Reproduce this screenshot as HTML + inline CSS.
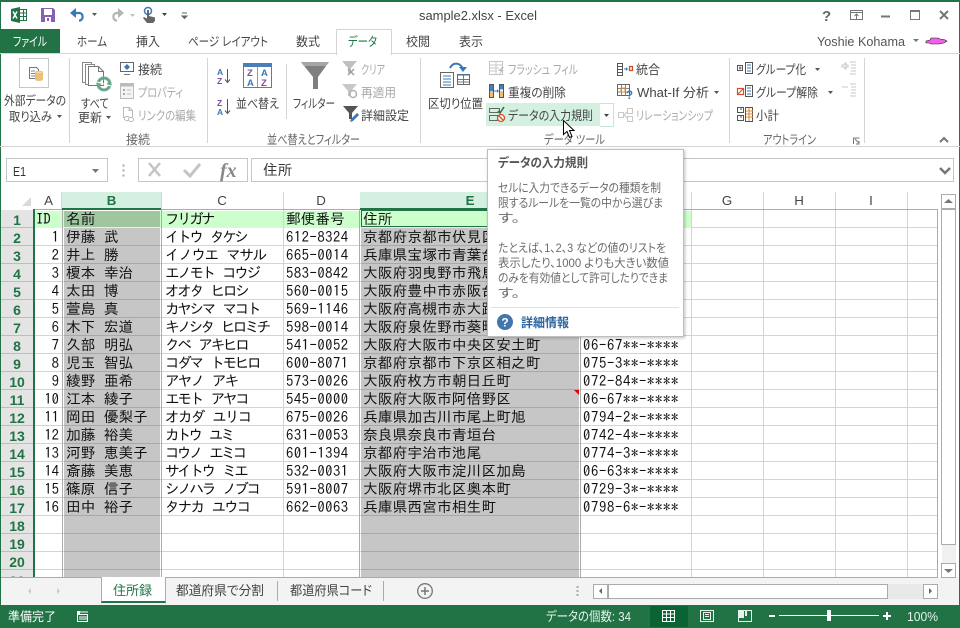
<!DOCTYPE html>
<html lang="ja"><head><meta charset="utf-8"><title>sample2.xlsx - Excel</title>
<style>
html,body{margin:0;padding:0;background:#fff}
#w{position:relative;width:960px;height:628px;overflow:hidden;background:#fff;font-family:"Liberation Sans","Noto Sans CJK JP",sans-serif;font-size:12px;color:#444}
.b{position:absolute}
svg text{font-family:"Liberation Sans","Noto Sans CJK JP",sans-serif;font-size:12.5px;fill:#444;font-feature-settings:"palt";white-space:pre}
svg .g{fill:#a9a9a9}svg .l{fill:#666}svg .w{fill:#fff}svg .s{fill:#e8f2ec}
svg .tp{fill:#6d6d6d;font-size:12px}
.r{position:absolute;left:0;width:960px;height:18px;line-height:18px;font-family:"IPAGothic","Liberation Sans",sans-serif;font-size:14.67px;color:#111;white-space:nowrap}
.r span{position:absolute;top:0}
.r i{display:inline-block;width:8.5px}
.r .n{left:1px;top:1px;width:32px;text-align:center;color:#217346;font:bold 14px/18px "Liberation Sans",sans-serif}
.r .a{left:36px;width:23px;text-align:right}
.r .b1{left:66px}.r .c1{left:165px}.r .d1{left:286px;letter-spacing:.5px}.r .e1{left:363px;letter-spacing:.15px}.r .f1{left:583px;letter-spacing:.67px}
.ch{position:absolute;top:192px;height:17px;line-height:17px;text-align:center;font-size:13.3px;color:#444}
</style></head><body><div id="w">

<!-- window frame -->
<div class="b" style="left:0;top:0;width:960px;height:2px;background:#217346"></div>
<div class="b" style="left:0;top:0;width:1px;height:628px;background:#217346"></div>
<div class="b" style="left:959px;top:0;width:1px;height:628px;background:#217346"></div>

<!-- tab strip -->
<div class="b" style="left:0;top:29px;width:60px;height:25px;background:#217346"></div>
<div class="b" style="left:0;top:53px;width:960px;height:1px;background:#d4d4d4"></div>
<div class="b" style="left:336px;top:29px;width:54px;height:25px;background:#fff;border:1px solid #d4d4d4;border-bottom:0"></div>

<!-- ribbon bottom & highlight -->
<div class="b" style="left:0;top:146px;width:960px;height:1px;background:#d4d4d4"></div>
<div class="b" style="left:486px;top:103px;width:114px;height:23px;background:#d3f0e0"></div>
<div class="b" style="left:600px;top:103px;width:13px;height:22px;border:1px solid #c4e6d2;border-left:0"></div>
<div class="b" style="left:19px;top:58px;width:28px;height:28px;border:1px solid #c6c6c6"></div>

<!-- separators -->
<div class="b" style="left:69px;top:58px;width:1px;height:85px;background:#d4d4d4"></div>
<div class="b" style="left:207px;top:58px;width:1px;height:85px;background:#d4d4d4"></div>
<div class="b" style="left:286px;top:64px;width:1px;height:55px;background:#d4d4d4"></div>
<div class="b" style="left:420px;top:58px;width:1px;height:85px;background:#d4d4d4"></div>
<div class="b" style="left:729px;top:58px;width:1px;height:85px;background:#d4d4d4"></div>
<div class="b" style="left:864px;top:58px;width:1px;height:85px;background:#d4d4d4"></div>

<!-- formula bar -->
<div class="b" style="left:6px;top:158px;width:100px;height:22px;border:1px solid #c6c6c6"></div>
<div class="b" style="left:138px;top:158px;width:108px;height:22px;border:1px solid #c6c6c6"></div>
<div class="b" style="left:251px;top:158px;width:701px;height:22px;border:1px solid #c6c6c6"></div>
<div class="b" style="left:263px;top:161px;font:14.67px/18px 'IPAGothic',sans-serif;color:#333">住所</div>

<!-- column header -->
<div class="b" style="left:62px;top:192px;width:99px;height:17px;background:#d3f0e0"></div>
<div class="b" style="left:360px;top:192px;width:220px;height:17px;background:#d3f0e0"></div>
<div class="ch" style="left:35px;width:27px">A</div>
<div class="ch" style="left:62px;width:99px;color:#217346;font-weight:bold">B</div>
<div class="ch" style="left:161px;width:122px">C</div>
<div class="ch" style="left:283px;width:76px">D</div>
<div class="ch" style="left:360px;width:220px;color:#217346;font-weight:bold">E</div>
<div class="ch" style="left:691px;width:72px">G</div>
<div class="ch" style="left:763px;width:72px">H</div>
<div class="ch" style="left:835px;width:72px">I</div>
<div class="b" style="left:61px;top:192px;width:1px;height:17px;background:#d4d4d4"></div>
<div class="b" style="left:161px;top:192px;width:1px;height:17px;background:#d4d4d4"></div>
<div class="b" style="left:283px;top:192px;width:1px;height:17px;background:#d4d4d4"></div>
<div class="b" style="left:691px;top:192px;width:1px;height:17px;background:#d4d4d4"></div>
<div class="b" style="left:763px;top:192px;width:1px;height:17px;background:#d4d4d4"></div>
<div class="b" style="left:835px;top:192px;width:1px;height:17px;background:#d4d4d4"></div>
<div class="b" style="left:907px;top:192px;width:1px;height:17px;background:#d4d4d4"></div>
<div class="b" style="left:35px;top:209px;width:903px;height:1px;background:#ababab"></div>
<div class="b" style="left:62px;top:208px;width:99px;height:2px;background:#217346"></div>
<div class="b" style="left:360px;top:208px;width:220px;height:2px;background:#217346"></div>

<!-- grid -->
<div class="b" style="left:1px;top:210px;width:32px;height:367px;background:repeating-linear-gradient(to bottom,#e4e4e4 0 17px,#bdbdbd 17px 18px)"></div>
<div class="b" style="left:33px;top:209px;width:2px;height:368px;background:#217346"></div>
<div class="b" style="left:35px;top:210px;width:902px;height:367px;background:repeating-linear-gradient(to bottom,#fff 0 17px,#d4d4d4 17px 18px)"></div>
<div class="b" style="left:35px;top:211px;width:656px;height:17px;background:#ccffcc"></div>
<div class="b" style="left:283px;top:210px;width:1px;height:367px;background:#d4d4d4"></div>
<div class="b" style="left:691px;top:210px;width:1px;height:367px;background:#d4d4d4"></div>
<div class="b" style="left:763px;top:210px;width:1px;height:367px;background:#d4d4d4"></div>
<div class="b" style="left:835px;top:210px;width:1px;height:367px;background:#d4d4d4"></div>
<div class="b" style="left:907px;top:210px;width:1px;height:367px;background:#d4d4d4"></div>
<div class="b" style="left:937px;top:209px;width:1px;height:369px;background:#ababab"></div>
<div class="b" style="left:62px;top:210px;width:1px;height:367px;background:#ababab"></div>
<div class="b" style="left:161px;top:210px;width:1px;height:367px;background:#ababab"></div>
<div class="b" style="left:359px;top:210px;width:1px;height:367px;background:#ababab"></div>
<div class="b" style="left:580px;top:210px;width:1px;height:367px;background:#ababab"></div>
<div class="b" style="left:64px;top:228px;width:96px;height:349px;background:repeating-linear-gradient(to bottom,#c6c6c6 0 17px,#a8a8a8 17px 18px)"></div>
<div class="b" style="left:361px;top:228px;width:218px;height:349px;background:repeating-linear-gradient(to bottom,#c6c6c6 0 17px,#a8a8a8 17px 18px)"></div>
<div class="b" style="left:64px;top:211px;width:96px;height:16px;background:#9fc69f"></div>
<div class="b" style="left:361px;top:210px;width:218px;height:17px;border:1px solid #217346;box-sizing:border-box;background:#ccffcc"></div>
<div class="b" style="left:574px;top:390px;width:0;height:0;border-top:5px solid #e00000;border-left:5px solid transparent"></div>

<!-- cell rows -->
<div class="r" style="top:210px"><span class="n">1</span><span style="left:36px">ID</span><span class="b1">名前</span><span class="c1" style="letter-spacing:-2.67px">フリガナ</span><span class="d1" style="letter-spacing:0">郵便番号</span><span class="e1">住所</span></div>
<div class="r" style="top:228px"><span class="n">2</span><span class="a">1</span><span class="b1">伊藤<i></i>武</span><span class="c1" style="letter-spacing:-2.5px">イトウ<i></i>タケシ</span><span class="d1">612-8324</span><span class="e1">京都府京都市伏見区</span></div>
<div class="r" style="top:246px"><span class="n">3</span><span class="a">2</span><span class="b1">井上<i></i>勝</span><span class="c1" style="letter-spacing:-1.5px">イノウエ<i></i>マサル</span><span class="d1">665-0014</span><span class="e1">兵庫県宝塚市青葉台</span></div>
<div class="r" style="top:264px"><span class="n">4</span><span class="a">3</span><span class="b1">榎本<i></i>幸治</span><span class="c1" style="letter-spacing:-2.5px">エノモト<i></i>コウジ</span><span class="d1">583-0842</span><span class="e1">大阪府羽曳野市飛鳥</span></div>
<div class="r" style="top:282px"><span class="n">5</span><span class="a">4</span><span class="b1">太田<i></i>博</span><span class="c1" style="letter-spacing:-2.3px">オオタ<i></i>ヒロシ</span><span class="d1">560-0015</span><span class="e1">大阪府豊中市赤阪台</span></div>
<div class="r" style="top:300px"><span class="n">6</span><span class="a">5</span><span class="b1">萱島<i></i>真</span><span class="c1" style="letter-spacing:-2.4px">カヤシマ<i></i>マコト</span><span class="d1">569-1146</span><span class="e1">大阪府高槻市赤大路</span></div>
<div class="r" style="top:318px"><span class="n">7</span><span class="a">6</span><span class="b1">木下<i></i>宏道</span><span class="c1" style="letter-spacing:-2.8px">キノシタ<i></i>ヒロミチ</span><span class="d1">598-0014</span><span class="e1">大阪府泉佐野市葵町</span></div>
<div class="r" style="top:336px"><span class="n">8</span><span class="a">7</span><span class="b1">久部<i></i>明弘</span><span class="c1" style="letter-spacing:-2.3px">クベ<i></i>アキヒロ</span><span class="d1">541-0052</span><span class="e1">大阪府大阪市中央区安土町</span><span class="f1">06-67**-****</span></div>
<div class="r" style="top:354px"><span class="n">9</span><span class="a">8</span><span class="b1">児玉<i></i>智弘</span><span class="c1" style="letter-spacing:-2.4px">コダマ<i></i>トモヒロ</span><span class="d1">600-8071</span><span class="e1">京都府京都市下京区相之町</span><span class="f1">075-3**-****</span></div>
<div class="r" style="top:372px"><span class="n">10</span><span class="a">9</span><span class="b1">綾野<i></i>亜希</span><span class="c1" style="letter-spacing:-1.9px">アヤノ<i></i>アキ</span><span class="d1">573-0026</span><span class="e1">大阪府枚方市朝日丘町</span><span class="f1">072-84*-****</span></div>
<div class="r" style="top:390px"><span class="n">11</span><span class="a">10</span><span class="b1">江本<i></i>綾子</span><span class="c1" style="letter-spacing:-2.3px">エモト<i></i>アヤコ</span><span class="d1">545-0000</span><span class="e1">大阪府大阪市阿倍野区</span><span class="f1">06-67**-****</span></div>
<div class="r" style="top:408px"><span class="n">12</span><span class="a">11</span><span class="b1">岡田<i></i>優梨子</span><span class="c1" style="letter-spacing:-1.8px">オカダ<i></i>ユリコ</span><span class="d1">675-0026</span><span class="e1">兵庫県加古川市尾上町旭</span><span class="f1">0794-2*-****</span></div>
<div class="r" style="top:426px"><span class="n">13</span><span class="a">12</span><span class="b1">加藤<i></i>裕美</span><span class="c1" style="letter-spacing:-2.9px">カトウ<i></i>ユミ</span><span class="d1">631-0053</span><span class="e1">奈良県奈良市青垣台</span><span class="f1">0742-4*-****</span></div>
<div class="r" style="top:444px"><span class="n">14</span><span class="a">13</span><span class="b1">河野<i></i>恵美子</span><span class="c1" style="letter-spacing:-2.8px">コウノ<i></i>エミコ</span><span class="d1">601-1394</span><span class="e1">京都府宇治市池尾</span><span class="f1">0774-3*-****</span></div>
<div class="r" style="top:462px"><span class="n">15</span><span class="a">14</span><span class="b1">斎藤<i></i>美恵</span><span class="c1" style="letter-spacing:-2.5px">サイトウ<i></i>ミエ</span><span class="d1">532-0031</span><span class="e1">大阪府大阪市淀川区加島</span><span class="f1">06-63**-****</span></div>
<div class="r" style="top:480px"><span class="n">16</span><span class="a">15</span><span class="b1">篠原<i></i>信子</span><span class="c1" style="letter-spacing:-2.5px">シノハラ<i></i>ノブコ</span><span class="d1">591-8007</span><span class="e1">大阪府堺市北区奥本町</span><span class="f1">0729-3*-****</span></div>
<div class="r" style="top:498px"><span class="n">17</span><span class="a">16</span><span class="b1">田中<i></i>裕子</span><span class="c1" style="letter-spacing:-2px">タナカ<i></i>ユウコ</span><span class="d1">662-0063</span><span class="e1">兵庫県西宮市相生町</span><span class="f1">0798-6*-****</span></div>
<div class="r" style="top:516px"><span class="n">18</span></div>
<div class="r" style="top:534px"><span class="n">19</span></div>
<div class="r" style="top:552px"><span class="n">20</span></div>
<div class="r" style="top:571px"><span class="n">21</span></div>

<!-- sheet tab area -->
<div class="b" style="left:1px;top:577px;width:958px;height:28px;background:#f3f3f3"></div>
<div class="b" style="left:938px;top:194px;width:21px;height:383px;background:#fff"></div>
<div class="b" style="left:1px;top:577px;width:937px;height:1px;background:#ababab"></div>
<div class="b" style="left:101px;top:577px;width:63px;height:24px;background:#fff;border-left:1px solid #ababab;border-right:1px solid #ababab;border-bottom:2px solid #217346"></div>
<div class="b" style="left:277px;top:581px;width:1px;height:20px;background:#ababab"></div>
<div class="b" style="left:383px;top:581px;width:1px;height:20px;background:#ababab"></div>

<!-- scrollbars -->
<div class="b" style="left:941px;top:194px;width:13px;height:13px;border:1px solid #ababab;background:#fff"></div>
<div class="b" style="left:941px;top:209px;width:13px;height:334px;border:1px solid #ababab;background:#fff"></div>
<div class="b" style="left:942px;top:545px;width:14px;height:18px;background:#f0f0f0"></div>
<div class="b" style="left:941px;top:563px;width:13px;height:13px;border:1px solid #ababab;background:#fff"></div>
<div class="b" style="left:608px;top:584px;width:315px;height:15px;background:#e9e9e9"></div>
<div class="b" style="left:593px;top:584px;width:13px;height:13px;border:1px solid #ababab;background:#fff"></div>
<div class="b" style="left:608px;top:584px;width:278px;height:13px;border:1px solid #ababab;background:#fff"></div>
<div class="b" style="left:923px;top:584px;width:13px;height:13px;border:1px solid #ababab;background:#fff"></div>

<!-- status bar -->
<div class="b" style="left:0;top:605px;width:960px;height:23px;background:#217346"></div>
<div class="b" style="left:650px;top:606px;width:38px;height:21px;background:#0a6332"></div>

<!-- icons -->
<svg class="b" style="left:0;top:0" width="960" height="628" viewBox="0 0 960 628" fill="none">
<!-- excel -->
<rect x="19.5" y="9.5" width="7" height="11" fill="#fff" stroke="#217346"/><path d="M20 13h7M20 16.500h7M23.500 10v10" stroke="#217346"/>
<path d="M11 9l9-2v16l-9-2z" fill="#217346"/><path d="M13 11.500l4 7M17 11.500l-4 7" stroke="#fff" stroke-width="1.500"/>
<!-- save -->
<path d="M41 8h12l2 2v12H41z" fill="#8561b5"/><rect x="44" y="9" width="8" height="6" fill="#fff"/><rect x="45" y="17" width="6" height="5" fill="#fff"/><rect x="47" y="18" width="2" height="3" fill="#8561b5"/>
<!-- undo -->
<path d="M72 13h8a4 4 0 0 1 0 7.500h-1" stroke="#3a78b5" stroke-width="2.200"/><path d="M76 8v10l-6-5z" fill="#3a78b5"/>
<path d="M92 13h5l-2.500 3z" fill="#555"/>
<!-- redo -->
<path d="M122 13h-6a4 4 0 0 0 0 7.500h1" stroke="#b5b5b5" stroke-width="2.200"/><path d="M118 8v10l6-5z" fill="#b5b5b5"/>
<path d="M130 14h5l-2.500 3z" fill="#c0c0c0"/>
<!-- touch -->
<circle cx="148" cy="11" r="3.500" stroke="#3a78b5" stroke-width="1.500"/><path d="M147 10h2v6l6 1.500v3.500l-2 2h-6l-4-5 1-1 3 1.500z" fill="#666"/>
<path d="M162 13h5l-2.500 3z" fill="#444"/>
<path d="M182 13h5M182 16h5l-2.500 2.500z" stroke="#666" fill="#666" stroke-width="1"/>
<!-- window controls -->
<text x="822" y="21" style="font-weight:bold;font-size:15px;fill:#666">?</text>
<rect x="850.500" y="10.500" width="12" height="9" stroke="#777"/><path d="M851 12.500h11" stroke="#777"/><path d="M856.500 19v-5M854.500 16l2-2 2 2" stroke="#777"/>
<path d="M881 16.500h9" stroke="#777" stroke-width="2"/>
<rect x="910.500" y="10.500" width="9" height="9" stroke="#777"/><path d="M910 11h10" stroke="#777" stroke-width="2"/>
<path d="M940 11l8 8M948 11l-8 8" stroke="#777" stroke-width="2"/>
<path d="M913 39h6l-3 3z" fill="#777"/>
<path d="M926 41l4-1 1-2h7l2 1 4 0.500 3 1.500-3 2-5 1h-8l-2-1h-3z" fill="#f060e8" stroke="#222" stroke-width=".6"/>
<!-- external data -->
<path d="M29.500 67.500h7l2 2v9h-9z" fill="#fff" stroke="#777"/><path d="M31 71h4M31 73.500h4M31 76h4" stroke="#888"/>
<path d="M35 72.500h8v7a4 1.500 0 0 1-8 0z" fill="#edbf78"/><ellipse cx="39" cy="72.500" rx="4" ry="1.500" fill="#f3d9a8" stroke="#d9a65a" stroke-width=".5"/>
<path d="M57 115h5l-2.500 3z" fill="#555"/>
<!-- refresh all -->
<path d="M82.500 62.500h9v20h-9z" fill="#fff" stroke="#888"/><path d="M85.500 64.500h9v20h-9z" fill="#fff" stroke="#888"/><path d="M88.500 66.500h10l5 5v14h-15z" fill="#fff" stroke="#777"/><path d="M98.500 66.500v5h5" stroke="#777"/>
<circle cx="104" cy="84" r="6" stroke="#6aa88a" stroke-width="3"/><path d="M96 83h6l-3 4zM112 85h-6l3-4z" fill="#6aa88a"/><path d="M97 82l14 4" stroke="#fff" stroke-width="1"/>
<path d="M106 116h5l-2.500 3z" fill="#555"/>
<!-- connections -->
<rect x="120.500" y="62.500" width="13" height="9" stroke="#666"/><path d="M124 74.500h6" stroke="#777"/><path d="M127 64l3 3-3 3-3-3z" fill="#3a78b5"/>
<!-- properties -->
<rect x="120.500" y="83.500" width="13" height="15" fill="#f4f4f4" stroke="#bbb"/><path d="M120 85h14" stroke="#bbb" stroke-width="3"/><rect x="123" y="89" width="2" height="2" fill="#aaa"/><rect x="123" y="93" width="2" height="2" fill="#aaa"/><path d="M127 90h4M127 94h4" stroke="#bbb"/>
<!-- edit links -->
<path d="M123.500 107.500h6l3 3v7h-9z" stroke="#bbb"/><path d="M129 107.500v3h3" stroke="#bbb"/><rect x="124.500" y="116.500" width="5" height="4" rx="2" stroke="#bbb" fill="#fff"/><rect x="128.500" y="117.500" width="5" height="4" rx="2" stroke="#bbb" fill="#fff"/>
<!-- sort az -->
<text x="217" y="75" style="font-size:8.500px;font-weight:bold;fill:#3a78b5">A</text><text x="217" y="84" style="font-size:8.500px;font-weight:bold;fill:#7a4fa8">Z</text>
<text x="217" y="106" style="font-size:8.500px;font-weight:bold;fill:#7a4fa8">Z</text><text x="217" y="115" style="font-size:8.500px;font-weight:bold;fill:#3a78b5">A</text>
<path d="M227.500 69v13M225 79.500l2.500 3 2.500-3M227.500 99v14M225 110.500l2.500 3 2.500-3" stroke="#555"/>
<!-- big sort -->
<rect x="243.500" y="63.500" width="28" height="24" fill="#fff" stroke="#777"/><rect x="243" y="63" width="29" height="4" fill="#4a7ebb"/><path d="M257.500 67v20" stroke="#999"/>
<text x="247" y="76" style="font-size:9.500px;font-weight:bold;fill:#7a4fa8">Z</text><text x="261" y="76" style="font-size:9.500px;font-weight:bold;fill:#3a78b5">A</text><text x="247" y="86" style="font-size:9.500px;font-weight:bold;fill:#3a78b5">A</text><text x="261" y="86" style="font-size:9.500px;font-weight:bold;fill:#7a4fa8">Z</text>
<!-- filter -->
<path d="M301 62h28l-11 15v12h-5V77z" fill="#7f7f7f"/><path d="M301 62h28l-3 4h-22z" fill="#a6a6a6"/>
<path d="M342 61h15l-6 7v5h-3v-5z" fill="#c0c0c0"/><path d="M348 69l6 6M354 69l-6 6" stroke="#a0a0a0" stroke-width="1.500"/>
<path d="M342 84h15l-6 7v5h-3v-5z" fill="#c8c8c8"/><circle cx="353" cy="94" r="3.500" stroke="#a8b8a8" stroke-width="1.500"/>
<path d="M343 106h15l-6 7v6h-3v-6z" fill="#555"/><path d="M350 122l1-3 6-6 2 2-6 6z" fill="#3a78b5"/>
<!-- text to columns -->
<rect x="440.500" y="72.500" width="13" height="15" fill="#fff" stroke="#666"/><path d="M443 76h8M443 79h8M443 82h8M443 85h8" stroke="#3a78b5"/>
<rect x="457.500" y="74.500" width="12" height="10" fill="#fff" stroke="#666"/><path d="M463.500 75v9M458 79.500h11M458 82h11" stroke="#777"/><path d="M458 75h12" stroke="#3a78b5" stroke-width="1"/>
<path d="M450 68c3-6 10-6 13 1" stroke="#3a78b5" stroke-width="2"/><path d="M459 67h8l-4 5z" fill="#3a78b5"/>
<!-- flash fill -->
<rect x="489.500" y="61.500" width="13" height="13" stroke="#c4c4c4"/><path d="M489 65h14M489 68h10M489 71h8M496 62v12" stroke="#c8c8c8"/><path d="M502 67l-4 4h3l-3 4 6-5h-3l3-3z" fill="#bbb"/>
<!-- remove duplicates -->
<rect x="489.500" y="84.500" width="4" height="13" fill="#edbf78" stroke="#555"/><rect x="490" y="85" width="3" height="6" fill="#4a7ebb"/>
<rect x="499.500" y="84.500" width="4" height="13" fill="#edbf78" stroke="#555"/><rect x="500" y="85" width="3" height="4" fill="#4a7ebb"/><rect x="500" y="90" width="3" height="1" fill="#fff"/>
<path d="M494 91h4" stroke="#3a78b5"/><path d="M497 89l2 2-2 2z" fill="#3a78b5"/>
<!-- data validation -->
<rect x="489.500" y="108.500" width="10" height="4" stroke="#666"/><rect x="489.500" y="115.500" width="8" height="5" stroke="#666"/>
<path d="M498 111l2 2 4-6" stroke="#217346" stroke-width="1.500"/><circle cx="501" cy="118" r="3.500" fill="#fff" stroke="#d4502a" stroke-width="1.300"/><path d="M498.500 115.500l5 5" stroke="#d4502a" stroke-width="1.300"/>
<path d="M604 114h5l-2.500 3z" fill="#444"/>
<!-- consolidate -->
<rect x="617.500" y="63.500" width="5" height="12" stroke="#555"/><path d="M618 66.500h4M618 69.500h4M618 72.500h4" stroke="#555"/><path d="M624 69h3" stroke="#3a78b5"/><path d="M626 67l2 2-2 2z" fill="#3a78b5"/><rect x="629.500" y="66.500" width="3" height="4" stroke="#c8502a" stroke-width="1.300"/>
<!-- what-if -->
<rect x="617.500" y="84.500" width="12" height="11" stroke="#666"/><path d="M621.500 85v10M625.500 85v10M618 88.500h11M618 92h11" stroke="#888"/><rect x="621" y="88" width="4" height="4" stroke="#e08a2a"/>
<text x="626" y="99" style="font-weight:bold;font-size:11.500px;fill:#3a78b5">?</text>
<!-- relationships -->
<g stroke="#c8c8c8"><rect x="618.500" y="112.500" width="5" height="5"/><rect x="627.500" y="108.500" width="5" height="5"/><rect x="627.500" y="116.500" width="5" height="5"/><path d="M624 115l3-3M624 115l3 3"/></g>
<!-- dropdown carets -->
<path d="M714 91h5l-2.500 3z" fill="#555"/>
<path d="M815 68h5l-2.500 3z" fill="#555"/>
<path d="M828 91h5l-2.500 3z" fill="#555"/>
<!-- group -->
<rect x="737.500" y="65.500" width="5" height="5" stroke="#555"/><path d="M739 68h2.500M740 66.500v3" stroke="#555"/><rect x="737.500" y="72" width="5" height="0" stroke="#555"/>
<rect x="745.500" y="62.500" width="7" height="11" stroke="#555"/><path d="M747 65h4M747 68h4M747 71h4" stroke="#3a78b5"/>
<!-- ungroup -->
<rect x="737.500" y="88.500" width="6" height="6" stroke="#d4502a" stroke-width="1.200"/><path d="M738 94l5-5" stroke="#d4502a"/>
<rect x="745.500" y="85.500" width="7" height="11" stroke="#555"/><path d="M747 88h4M747 91h4M747 94h4" stroke="#3a78b5"/>
<!-- subtotal -->
<rect x="737.500" y="107.500" width="6" height="5" stroke="#555"/><rect x="737.500" y="115.500" width="6" height="5" stroke="#555"/>
<rect x="745.500" y="107.500" width="7" height="14" stroke="#555"/><path d="M746 111h7M746 114h7M746 117h7M749 108v13" stroke="#e08a2a"/><path d="M740 109h2M740 117h2" stroke="#555"/>
<!-- show / hide detail -->
<path d="M842 65h3v-2h1v2h2v2h-2v2h-1v-2h-3zM850 62h6M851 65h5M851 68h5M851 71h5M850 74h6" stroke="#c8c8c8"/>
<path d="M842 87h6M850 84h6M851 87h5M851 90h5M851 93h5M850 96h6" stroke="#c8c8c8"/>
<!-- launcher -->
<path d="M853.500 144v-6h6M855 139l4 4M859 141v3h-3" stroke="#777"/>
<!-- collapse -->
<path d="M940 142l4-4 4 4" stroke="#777" stroke-width="2"/>
<!-- formula bar -->
<path d="M92 169h7l-3.500 4z" fill="#777"/>
<path d="M123 165h1v1h-1zM123 170h1v1h-1zM123 175h1v1h-1z" fill="#aaa" stroke="#aaa"/>
<path d="M149 163l11 13M160 163l-11 13" stroke="#c4c4c4" stroke-width="2.500"/>
<path d="M184 170l6 6 10-12" stroke="#c4c4c4" stroke-width="3"/>
<text x="220" y="177" style="font-family:'Liberation Serif';font-style:italic;font-weight:bold;font-size:20px;fill:#888">fx</text>
<path d="M940 168l5 5 5-5" stroke="#777" stroke-width="2.500"/>
<!-- corner -->
<path d="M31 197v9h-9z" fill="#d9d9d9"/>
<!-- scroll arrows -->
<path d="M944 203h9l-4.500-4z" fill="#777"/><path d="M944 569h9l-4.500 4z" fill="#777"/>
<path d="M602 588v6l-3-3z" fill="#666"/><path d="M929 588v6l3-3z" fill="#666"/>
<path d="M31 588v6l-3-3z" fill="#ccc"/><path d="M57 588v6l3-3z" fill="#ccc"/>
<!-- tab plus -->
<circle cx="425" cy="591" r="7.300" stroke="#777" stroke-width="1.300"/><path d="M421 591h8M425 587v8" stroke="#777" stroke-width="1.500"/>
<path d="M576.500 586h2v2h-2zM576.500 590h2v2h-2zM576.500 594h2v2h-2z" fill="#aaa"/>
<!-- status icons -->
<path d="M77 611h3v3h-3z" fill="#fff"/><rect x="77.500" y="614.500" width="10" height="7" stroke="#fff"/><path d="M80 612h8M79 617h8M79 619h8" stroke="#fff"/>
<rect x="662.500" y="610.500" width="12" height="11" stroke="#fff"/><path d="M666.500 611v10M670.500 611v10M663 614h11M663 617.500h11" stroke="#fff"/>
<rect x="700.500" y="610.500" width="13" height="11" stroke="#e8f2ec"/><rect x="703.500" y="612.500" width="7" height="7" stroke="#e8f2ec"/><path d="M705 614.500h4M705 616.500h4" stroke="#e8f2ec"/>
<rect x="738.500" y="610.500" width="13" height="11" stroke="#e8f2ec"/><path d="M739 611h5v7h-5zM745 611h2v5h-2z" fill="#e8f2ec"/>
<path d="M769 616h6" stroke="#fff" stroke-width="2"/><path d="M779 615.500h100" stroke="#fff"/><rect x="827" y="610" width="4" height="11" fill="#fff"/><path d="M883 616h8M887 612v8" stroke="#fff" stroke-width="2"/>
</svg>

<!-- UI text -->
<svg class="b" style="left:0;top:0" width="960" height="628" viewBox="0 0 960 628">
<text x="419" y="20" style="font-size:13px" textLength="118" lengthAdjust="spacingAndGlyphs">sample2.xlsx - Excel</text>
<text x="13" y="46" class="w" textLength="34" lengthAdjust="spacingAndGlyphs">ファイル</text>
<text x="77" y="46" textLength="30" lengthAdjust="spacingAndGlyphs">ホーム</text>
<text x="136" y="46" textLength="24" lengthAdjust="spacingAndGlyphs">挿入</text>
<text x="188" y="46" textLength="80" lengthAdjust="spacingAndGlyphs">ページ レイアウト</text>
<text x="296" y="46" textLength="24" lengthAdjust="spacingAndGlyphs">数式</text>
<text x="348" y="46" style="fill:#217346" textLength="29" lengthAdjust="spacingAndGlyphs">データ</text>
<text x="406" y="46" textLength="24" lengthAdjust="spacingAndGlyphs">校閲</text>
<text x="459" y="46" textLength="24" lengthAdjust="spacingAndGlyphs">表示</text>
<text x="817" y="46" style="fill:#555" textLength="88" lengthAdjust="spacingAndGlyphs">Yoshie Kohama</text>

<text x="4" y="105" textLength="62" lengthAdjust="spacingAndGlyphs">外部データの</text>
<text x="9" y="121" textLength="43" lengthAdjust="spacingAndGlyphs">取り込み</text>
<text x="81" y="108" textLength="28" lengthAdjust="spacingAndGlyphs">すべて</text>
<text x="78" y="122" textLength="24" lengthAdjust="spacingAndGlyphs">更新</text>
<text x="138" y="74" textLength="24" lengthAdjust="spacingAndGlyphs">接続</text>
<text x="138" y="97" class="g" textLength="45" lengthAdjust="spacingAndGlyphs">プロパティ</text>
<text x="138" y="120" class="g" textLength="58" lengthAdjust="spacingAndGlyphs">リンクの編集</text>
<text x="126" y="144" class="l" textLength="24" lengthAdjust="spacingAndGlyphs">接続</text>
<text x="236" y="108" textLength="43" lengthAdjust="spacingAndGlyphs">並べ替え</text>
<text x="293" y="108" textLength="42" lengthAdjust="spacingAndGlyphs">フィルター</text>
<text x="361" y="74" class="g" textLength="24" lengthAdjust="spacingAndGlyphs">クリア</text>
<text x="361" y="97" class="g" textLength="35" lengthAdjust="spacingAndGlyphs">再適用</text>
<text x="361" y="120" textLength="48" lengthAdjust="spacingAndGlyphs">詳細設定</text>
<text x="267" y="144" class="l" textLength="93" lengthAdjust="spacingAndGlyphs">並べ替えとフィルター</text>
<text x="428" y="108" textLength="55" lengthAdjust="spacingAndGlyphs">区切り位置</text>
<text x="508" y="74" class="g" textLength="70" lengthAdjust="spacingAndGlyphs">フラッシュ フィル</text>
<text x="508" y="97" textLength="58" lengthAdjust="spacingAndGlyphs">重複の削除</text>
<text x="508" y="120" textLength="85" lengthAdjust="spacingAndGlyphs">データの入力規則</text>
<text x="544" y="144" class="l" textLength="61" lengthAdjust="spacingAndGlyphs">データ ツール</text>
<text x="636" y="74" textLength="24" lengthAdjust="spacingAndGlyphs">統合</text>
<text x="637" y="97" textLength="72" lengthAdjust="spacingAndGlyphs">What-If 分析</text>
<text x="636" y="120" class="g" textLength="77" lengthAdjust="spacingAndGlyphs">リレーションシップ</text>
<text x="756" y="74" textLength="50" lengthAdjust="spacingAndGlyphs">グループ化</text>
<text x="756" y="97" textLength="62" lengthAdjust="spacingAndGlyphs">グループ解除</text>
<text x="756" y="120" textLength="23" lengthAdjust="spacingAndGlyphs">小計</text>
<text x="763" y="144" class="l" textLength="53" lengthAdjust="spacingAndGlyphs">アウトライン</text>

<text x="13" y="176" style="font-size:13px;fill:#333" textLength="13" lengthAdjust="spacingAndGlyphs">E1</text>

<text x="113" y="595" style="font-size:13px;fill:#217346" textLength="39" lengthAdjust="spacingAndGlyphs">住所録</text>
<text x="176" y="595" style="font-size:13px" textLength="88" lengthAdjust="spacingAndGlyphs">都道府県で分割</text>
<text x="290" y="595" style="font-size:13px" textLength="82" lengthAdjust="spacingAndGlyphs">都道府県コード</text>

<text x="8" y="621" class="w" textLength="48" lengthAdjust="spacingAndGlyphs">準備完了</text>
<text x="546" y="621" class="s" style="font-size:13px" textLength="85" lengthAdjust="spacingAndGlyphs">データの個数: 34</text>
<text x="907" y="621" class="s" style="font-size:13px" textLength="31" lengthAdjust="spacingAndGlyphs">100%</text>
</svg>

<!-- tooltip -->
<div class="b" style="left:487px;top:149px;width:195px;height:186px;background:#fff;border:1px solid #bfbfbf;box-shadow:1px 1px 3px rgba(0,0,0,.25)"></div>
<div class="b" style="left:491px;top:307px;width:188px;height:1px;background:#e1e1e1"></div>
<svg class="b" style="left:0;top:0" width="960" height="628" viewBox="0 0 960 628">
<text x="498" y="167" style="font-weight:bold;fill:#555" textLength="90" lengthAdjust="spacingAndGlyphs">データの入力規則</text>
<text x="498" y="192" class="tp" textLength="163" lengthAdjust="spacingAndGlyphs">セルに入力できるデータの種類を制</text>
<text x="498" y="207" class="tp" textLength="165" lengthAdjust="spacingAndGlyphs">限するルールを一覧の中から選びま</text>
<text x="498" y="222" class="tp" textLength="22" lengthAdjust="spacingAndGlyphs">す。</text>
<text x="498" y="252" class="tp" textLength="168" lengthAdjust="spacingAndGlyphs">たとえば、1、2、3 などの値のリストを</text>
<text x="498" y="267" class="tp" textLength="171" lengthAdjust="spacingAndGlyphs">表示したり、1000 よりも大きい数値</text>
<text x="498" y="282" class="tp" textLength="170" lengthAdjust="spacingAndGlyphs">のみを有効値として許可したりできま</text>
<text x="498" y="297" class="tp" textLength="22" lengthAdjust="spacingAndGlyphs">す。</text>
<circle cx="505" cy="322" r="8" fill="#4177ad"/>
<text x="505" y="326.500" text-anchor="middle" style="font-weight:bold;font-size:12px;fill:#fff">?</text>
<text x="521" y="327" style="font-weight:bold;fill:#2f66a0" textLength="48" lengthAdjust="spacingAndGlyphs">詳細情報</text>
</svg>

<!-- cursor -->
<svg class="b" style="left:562px;top:120px" width="16" height="20" viewBox="0 0 16 20"><path d="M1.500 .5v14l3.500-3 2.500 6 2.500-1-2.500-6h4.500z" fill="#fff" stroke="#000"/></svg>

</div></body></html>
